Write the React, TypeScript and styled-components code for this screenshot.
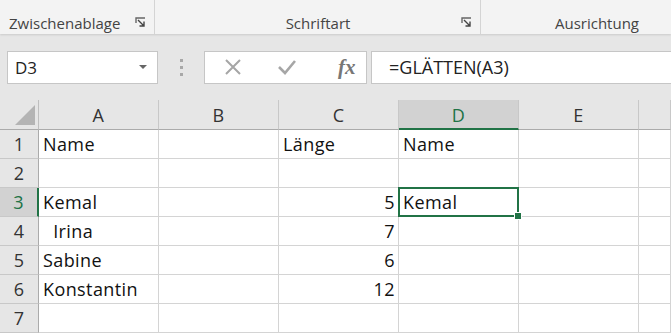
import styled, { createGlobalStyle } from "styled-components";

const GlobalStyle = createGlobalStyle`
  html, body {
    margin: 0;
    padding: 0;
    background: #ffffff;
    overflow: hidden;
  }
  body {
    font-family: "Open Sans", "Noto Sans", sans-serif;
  }
`;

const Page = styled.div`
  width: 671px;
  height: 334px;
  overflow: hidden;
  display: flex;
  flex-direction: column;
`;

/* ribbon */
const Ribbon = styled.div`
  height: 34px;
  flex: none;
  display: flex;
  background: #f3f3f3;
  box-shadow: 0 1px 2px rgba(0, 0, 0, 0.12);
  position: relative;
  z-index: 1;
`;

const Group = styled.div<{ $w: number; $align?: string }>`
  width: ${(p) => p.$w}px;
  flex: none;
  display: flex;
  align-items: flex-end;
  justify-content: ${(p) => p.$align || "center"};
  padding: 0 8px 1px 9px;
  box-sizing: border-box;
  border-right: 1px solid #d4d4d4;
  position: relative;
  color: #444;
  font-size: 15px;
  line-height: 20px;
`;

const Launcher = styled.svg`
  position: absolute;
  right: 8px;
  bottom: 6px;
`;

function LauncherIcon() {
  return (
    <Launcher width="11" height="11" viewBox="0 0 11 11">
      <path d="M1 6V1h9" fill="none" stroke="#666" strokeWidth="1.4" />
      <path d="M3 3l6 6M9 4.5V9H4.5" fill="none" stroke="#444" strokeWidth="1.4" />
    </Launcher>
  );
}

/* formula bar */
const FormulaBar = styled.div`
  height: 66px;
  flex: none;
  background: #e6e6e6;
  display: flex;
  align-items: center;
  padding: 0 0 0 7px;
  box-sizing: border-box;
`;

const NameBox = styled.div`
  width: 151px;
  height: 33px;
  flex: none;
  box-sizing: border-box;
  background: #fff;
  border: 1px solid #c6c6c6;
  display: flex;
  align-items: center;
  justify-content: space-between;
  padding: 0 10px 0 7px;
  font-size: 17px;
  color: #222;
`;

const Caret = styled.span`
  width: 0;
  height: 0;
  border-left: 4px solid transparent;
  border-right: 4px solid transparent;
  border-top: 4px solid #666;
`;

const Dots = styled.div`
  width: 46px;
  flex: none;
  display: flex;
  flex-direction: column;
  align-items: center;
  gap: 4px;
  & span {
    width: 3px;
    height: 3px;
    background: #a8a8a8;
  }
`;

const FnBox = styled.div`
  width: 163px;
  height: 33px;
  flex: none;
  box-sizing: border-box;
  background: #fff;
  border: 1px solid #c6c6c6;
  display: flex;
  align-items: center;
  padding-left: 19px;
`;

const FnButton = styled.div`
  width: 53px;
  display: flex;
  align-items: center;
`;

const Fx = styled.span`
  font-family: "Liberation Serif", "DejaVu Serif", serif;
  font-style: italic;
  font-weight: bold;
  font-size: 21px;
  color: #777;
  margin-left: 8px;
`;

const FormulaInput = styled.div`
  flex: 1;
  height: 33px;
  margin-left: 4px;
  box-sizing: border-box;
  background: #fff;
  border: 1px solid #c6c6c6;
  border-right: none;
  display: flex;
  align-items: center;
  padding-left: 17px;
  font-size: 18px;
  color: #222;
`;

/* grid */
const Sheet = styled.div`
  flex: none;
  display: grid;
  grid-template-columns: 39px repeat(5, 120px) 1fr;
  grid-template-rows: 30px repeat(7, 29px);
  font-size: 18px;
  letter-spacing: 0.4px;
`;

const Corner = styled.div`
  background: #e6e6e6;
  border-right: 1px solid #bfbfbf;
  border-bottom: 1px solid #ababab;
  box-sizing: border-box;
  display: flex;
  align-items: flex-end;
  justify-content: flex-end;
  padding: 0 3px 4px 0;
  & svg {
    display: block;
  }
`;

const ColHead = styled.div<{ $sel?: boolean }>`
  background: ${(p) => (p.$sel ? "#d2d2d2" : "#e6e6e6")};
  color: ${(p) => (p.$sel ? "#217346" : "#333")};
  border-right: 1px solid #c8c8c8;
  border-bottom: ${(p) => (p.$sel ? "2px solid #217346" : "1px solid #ababab")};
  box-sizing: border-box;
  display: flex;
  align-items: center;
  justify-content: center;
  padding-top: 1px;
`;

const RowHead = styled.div<{ $sel?: boolean }>`
  background: ${(p) => (p.$sel ? "#d2d2d2" : "#e6e6e6")};
  color: ${(p) => (p.$sel ? "#217346" : "#333")};
  border-right: ${(p) => (p.$sel ? "2px solid #217346" : "1px solid #ababab")};
  border-bottom: 1px solid #c8c8c8;
  box-sizing: border-box;
  display: flex;
  align-items: center;
  justify-content: center;
`;

const Cell = styled.div<{ $num?: boolean; $sel?: boolean }>`
  border-right: 1px solid #d4d4d4;
  border-bottom: 1px solid #d4d4d4;
  box-sizing: border-box;
  display: flex;
  align-items: center;
  justify-content: ${(p) => (p.$num ? "flex-end" : "flex-start")};
  padding: 0 3px 0 4px;
  white-space: pre;
  color: #111;
  position: relative;
  ${(p) =>
    p.$sel &&
    `
    &::before {
      content: "";
      position: absolute;
      left: -1px;
      top: -1px;
      right: -1px;
      bottom: -1px;
      border: 2px solid #217346;
    }
    &::after {
      content: "";
      position: absolute;
      right: -4px;
      bottom: -4px;
      width: 6px;
      height: 6px;
      background: #217346;
      border: 1px solid #fff;
      z-index: 2;
    }
  `}
`;

const cols = ["A", "B", "C", "D", "E", ""];
const rows: { a: string; c: string; d: string }[] = [
  { a: "Name", c: "Länge", d: "Name" },
  { a: "", c: "", d: "" },
  { a: "Kemal", c: "5", d: "Kemal" },
  { a: "  Irina", c: "7", d: "" },
  { a: "Sabine", c: "6", d: "" },
  { a: "Konstantin", c: "12", d: "" },
  { a: "", c: "", d: "" },
];

export default function App() {
  return (
    <Page>
      <GlobalStyle />
      <Ribbon>
        <Group $w={155} $align="flex-start">
          Zwischenablage
          <LauncherIcon />
        </Group>
        <Group $w={326}>
          Schriftart
          <LauncherIcon />
        </Group>
        <Group $w={232}>Ausrichtung</Group>
      </Ribbon>
      <FormulaBar>
        <NameBox>
          D3
          <Caret />
        </NameBox>
        <Dots>
          <span />
          <span />
          <span />
        </Dots>
        <FnBox>
          <FnButton>
            <svg width="18" height="18" viewBox="0 0 18 18">
              <path d="M2 2l14 14M16 2L2 16" stroke="#a6a6a6" strokeWidth="2" />
            </svg>
          </FnButton>
          <FnButton>
            <svg width="20" height="16" viewBox="0 0 20 16">
              <path d="M2 8l6 6L18 2" fill="none" stroke="#a6a6a6" strokeWidth="2.6" />
            </svg>
          </FnButton>
          <Fx>fx</Fx>
        </FnBox>
        <FormulaInput>=GLÄTTEN(A3)</FormulaInput>
      </FormulaBar>
      <Sheet>
        <Corner>
          <svg width="20" height="20" viewBox="0 0 20 20">
            <path d="M20 0V20H0Z" fill="#b4b4b4" />
          </svg>
        </Corner>
        {cols.map((c, i) => (
          <ColHead key={i} $sel={c === "D"}>
            {c}
          </ColHead>
        ))}
        {rows.map((r, i) => (
          <>
            <RowHead key={"h" + i} $sel={i === 2}>
              {i + 1}
            </RowHead>
            <Cell key={"a" + i}>{r.a}</Cell>
            <Cell key={"b" + i} />
            <Cell key={"c" + i} $num={/^\d+$/.test(r.c)}>
              {r.c}
            </Cell>
            <Cell key={"d" + i} $sel={i === 2}>
              {r.d}
            </Cell>
            <Cell key={"e" + i} />
            <Cell key={"f" + i} />
          </>
        ))}
      </Sheet>
    </Page>
  );
}
